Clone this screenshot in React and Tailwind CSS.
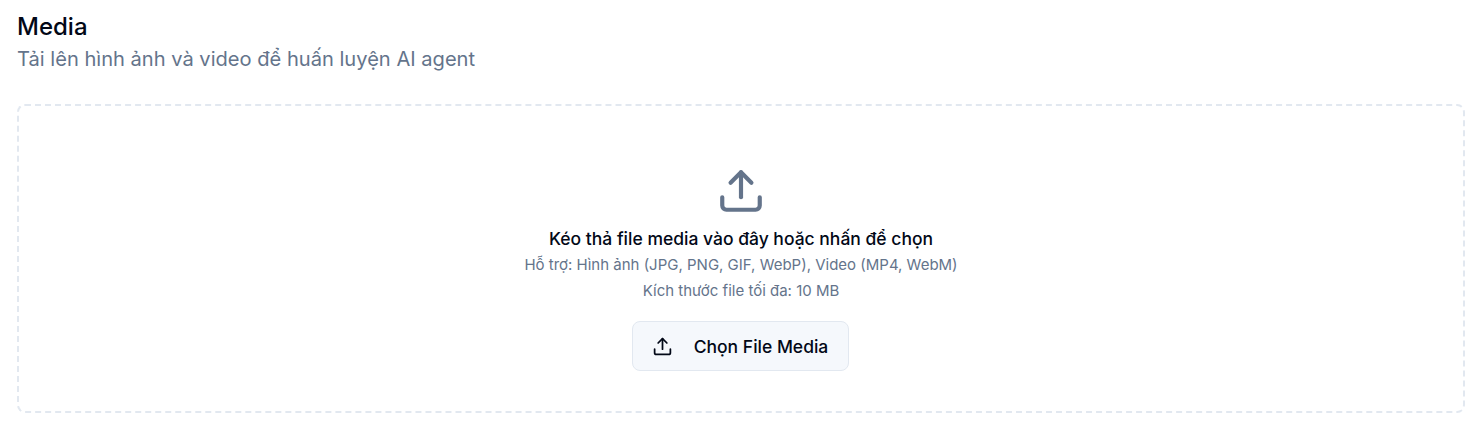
import React from 'react'
import { Upload } from 'lucide-react'

export default function App() {
  return (
    <div className="min-h-[423px] bg-white px-[17px] pt-[11px] font-['Inter',sans-serif]">
      {/* Header */}
      <div>
        <h1 className="text-2xl leading-[32px] font-medium text-[#020817]">Media</h1>
        <p className="text-[20.1px] leading-[28px] text-[#64748b] mt-[2px]">
          Tải lên hình ảnh và video để huấn luyện AI agent
        </p>
      </div>

      {/* Dropzone */}
      <div className="mt-[31px] h-[309px] rounded-lg border-2 border-dashed border-[#e2e8f0] flex flex-col items-center pt-[60px]">
        <Upload className="h-[50px] w-[50px] text-[#64748b]" />
        <p className="mt-[11px] text-[17.5px] leading-[24px] font-medium text-[#020817]">
          Kéo thả file media vào đây hoặc nhấn để chọn
        </p>
        <p className="mt-[4px] text-[15px] leading-[20px] text-[#64748b]">
          Hỗ trợ: Hình ảnh (JPG, PNG, GIF, WebP), Video (MP4, WebM)
        </p>
        <p className="mt-[6px] text-[15px] leading-[20px] text-[#64748b]">
          Kích thước file tối đa: 10 MB
        </p>
        <button className="mt-[20px] mr-[2px] h-[50px] w-[217px] rounded-lg border border-[#e2e8f0] bg-[#f5f8fc] flex items-center justify-center gap-[21px] text-[17.5px] font-medium text-[#020817]">
          <Upload className="h-[21px] w-[21px]" />
          <span className="pt-[2px]">Chọn File Media</span>
        </button>
      </div>
    </div>
  )
}
